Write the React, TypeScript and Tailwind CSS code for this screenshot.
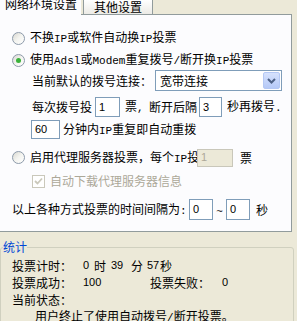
import type { ReactNode } from 'react'

const cjk = "font-['Noto_Sans_CJK_SC',sans-serif]"
const num = "font-['Liberation_Sans',sans-serif] text-[11px]"

function L({ children }: { children: ReactNode }) {
  // SimSun-like half width latin
  return <span className="font-['Liberation_Mono',monospace] text-[11px]">{children}</span>
}

function Radio({ checked }: { checked?: boolean }) {
  return (
    <span className="flex h-[13px] w-[13px] shrink-0 items-center justify-center rounded-full border border-[#8D9AAA] bg-gradient-to-br from-[#D9D8D1] via-[#F4F4F0] to-white">
      {checked && <span className="h-[5px] w-[5px] rounded-full bg-[#3AB23A]" />}
    </span>
  )
}

function Box({ value, w, h, disabled }: { value: string; w: string; h: string; disabled?: boolean }) {
  return (
    <span
      className={`flex shrink-0 items-center pl-[3px] font-['Liberation_Sans',sans-serif] text-[11px] leading-none ${w} ${h} ${
        disabled ? 'border border-[#C9C7BA] bg-[#ECE9D8] text-[#ACA899]' : 'border border-[#7F9DB9] bg-white text-black'
      }`}
    >
      {value}
    </span>
  )
}

function T({ w, children, className = '' }: { w?: string; children: ReactNode; className?: string }) {
  return <span className={`shrink-0 whitespace-nowrap leading-none ${w ?? ''} ${className}`}>{children}</span>
}

export default function App() {
  return (
    <div className={`h-[321px] w-[297px] overflow-hidden bg-[#ECE9D8] text-[12px] text-black ${cjk}`}>
      {/* tabs */}
      <div className="flex h-[14px] items-end">
        <div className="relative z-10 -mb-px flex h-[15px] w-[81px] items-start bg-[#FCFCFE] pl-[5px]">
          <span className="-mt-[2px] leading-none">网络环境设置</span>
        </div>
        <div className="ml-[2px] flex h-[14px] w-[70px] items-start justify-center border-x border-[#919B9C] bg-gradient-to-b from-white to-[#ECEBE6]">
          <span className="mt-[1px] leading-none">其他设置</span>
        </div>
      </div>

      {/* tab page */}
      <div className="h-[218px] w-[292px] border-r border-t border-b border-[#919B9C] bg-[#FCFCFE]">
        <div className="mt-[13px] flex h-[20px] items-center gap-[5px] pl-[12px]">
          <Radio />
          <T>不换<L>IP</L>或软件自动换<L>IP</L>投票</T>
        </div>
        <div className="mt-[2px] flex h-[20px] items-center gap-[5px] pl-[12px]">
          <Radio checked />
          <T>使用<L>Adsl</L>或<L>Modem</L>重复拨号<L>/</L>断开换<L>IP</L>投票</T>
        </div>
        <div className="flex h-[21px] items-center pl-[32px]">
          <T w="w-[123px]">当前默认的拨号连接：</T>
          <div className="flex h-[21px] w-[127px] items-center justify-between border border-[#7F9DB9] bg-white pl-[4px] pr-[1px]">
            <T>宽带连接</T>
            <span className="flex h-[17px] w-[17px] items-center justify-center rounded-[2px] border border-[#B4C8F4] bg-gradient-to-b from-[#D6E2FD] to-[#B5C9F7]">
              <svg width="9" height="6" viewBox="0 0 9 6">
                <path d="M1 1 L4.5 4.5 L8 1" fill="none" stroke="#4D6185" strokeWidth="2" />
              </svg>
            </span>
          </div>
        </div>
        <div className="mt-[6px] flex h-[20px] items-center pl-[32px]">
          <T w="w-[63px]">每次拨号投</T>
          <Box value="1" w="w-[25px]" h="h-[20px]" />
          <T w="w-[29px]" className="pl-[5px]">票<L>,</L></T>
          <T w="w-[50px]">断开后隔</T>
          <Box value="3" w="w-[23px]" h="h-[20px]" />
          <T className="pl-[5px]">秒再拨号<L>.</L></T>
        </div>
        <div className="mt-[3px] flex h-[19px] items-center pl-[31px]">
          <Box value="60" w="w-[29px]" h="h-[19px]" />
          <T className="pl-[3px]">分钟内<L>IP</L>重复即自动重拨</T>
        </div>
        <div className="mt-[9px] flex h-[19px] items-center pl-[12px]">
          <Radio />
          <T w="w-[172px]" className="pl-[5px]">启用代理服务器投票，每个<L>IP</L>投</T>
          <Box value="1" w="w-[36px]" h="h-[18px]" disabled />
          <T className="pl-[7px]">票</T>
        </div>
        <div className="mt-[7px] flex h-[14px] items-center gap-[5px] pl-[32px]">
          <span className="flex h-[13px] w-[13px] shrink-0 items-center justify-center border border-[#CAC8BB] bg-white">
            <svg width="9" height="8" viewBox="0 0 9 8">
              <path d="M1 4 L3.5 6.5 L8 1.5" fill="none" stroke="#CAC8BB" strokeWidth="1.8" />
            </svg>
          </span>
          <T className="text-[#ACA899]">自动下载代理服务器信息</T>
        </div>
        <div className="mt-[11px] flex h-[21px] items-center pl-[12px]">
          <T w="w-[177px]">以上各种方式投票的时间间隔为<L>:</L></T>
          <Box value="0" w="w-[24px]" h="h-[21px]" />
          <T w="w-[13px]" className="pt-[3px] text-center">
            <L>~</L>
          </T>
          <Box value="0" w="w-[24px]" h="h-[21px]" />
          <T className="pl-[6px]">秒</T>
        </div>
      </div>

      {/* statistics */}
      <fieldset className="mt-[9px] h-[120px] w-[294px] rounded-[3px] border border-[#D0D0BF]">
        <legend className="ml-[2px] leading-none text-[#0046D5]">统计</legend>
        <div className="mt-[4px] flex h-[17px] items-center pl-[11px]">
          <T w="w-[71px]">投票计时：</T>
          <T w="w-[11px]" className={num}>0</T>
          <T w="w-[17px]">时</T>
          <T w="w-[20px]" className={num}>39</T>
          <T w="w-[16px]">分</T>
          <T w="w-[13px]" className={num}>57</T>
          <T>秒</T>
        </div>
        <div className="flex h-[17px] items-center pl-[11px]">
          <T w="w-[71px]">投票成功：</T>
          <T w="w-[67px]" className={num}>100</T>
          <T w="w-[72px]">投票失败：</T>
          <T className={num}>0</T>
        </div>
        <div className="flex h-[17px] items-center pl-[11px]">
          <T>当前状态：</T>
        </div>
        <div className="flex h-[17px] items-center pl-[34px]">
          <T>用户终止了使用自动拨号<L>/</L>断开投票。</T>
        </div>
      </fieldset>
    </div>
  )
}
